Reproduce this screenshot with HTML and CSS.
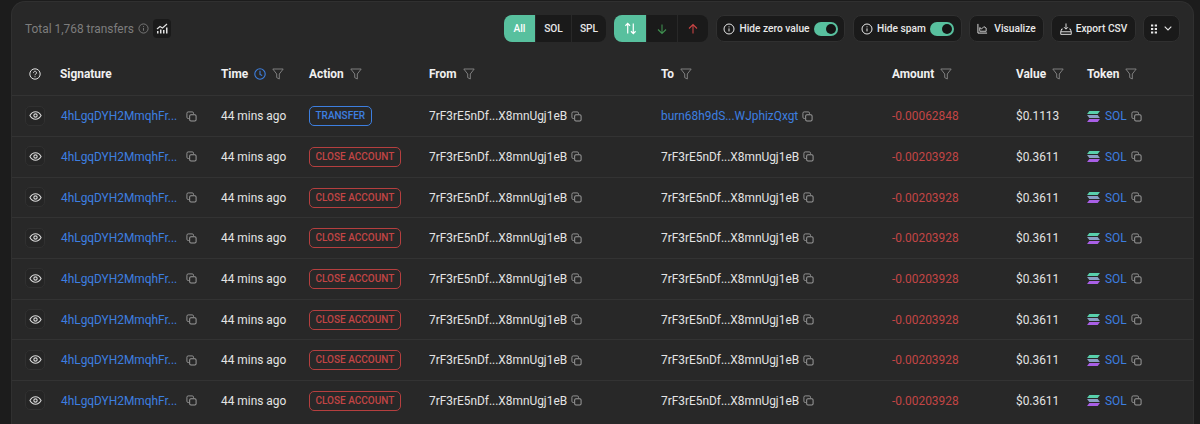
FILE: index.html
```html
<!DOCTYPE html>
<html lang="en">
<head>
<meta charset="utf-8">
<title>Transfers</title>
<link rel="stylesheet" href="styles.css">
</head>
<body>
<svg class="sprite" width="0" height="0" aria-hidden="true">
  <defs>
    <symbol id="copy" viewBox="0 0 12 12"><path d="M3.2 8.2H2.4A1.4 1.4 0 0 1 1 6.8V2.4A1.4 1.4 0 0 1 2.4 1h4.4a1.4 1.4 0 0 1 1.4 1.4v.8" fill="none" stroke="currentColor"/><rect x="4" y="4" width="7" height="7" rx="1.4" fill="none" stroke="currentColor" stroke-width="1.1"/></symbol>
    <symbol id="filter" viewBox="0 0 12 12"><path d="M.8 1h10.4L7.3 6v5L4.7 9.6V6z" fill="none" stroke="currentColor"/></symbol>
    <symbol id="eye" viewBox="0 0 14 14"><path d="M1 7c1.500-2.700 3.500-4 6-4s4.500 1.300 6 4c-1.500 2.700-3.500 4-6 4s-4.500-1.300-6-4z" fill="none" stroke="currentColor" stroke-width="1.200"/><circle cx="7" cy="7" r="1.800" fill="none" stroke="currentColor" stroke-width="1.200"/></symbol>
    <symbol id="info" viewBox="0 0 12 12"><circle cx="6" cy="6" r="5" fill="none" stroke="currentColor"/><path d="M6 5.400v3M6 3.400v.9" stroke="currentColor"/></symbol>
    <symbol id="sol" viewBox="0 0 14 12">
      <path d="M2.400 0H14l-2.400 3.200H0z" fill="#58d0ac"/>
      <path d="M0 4.400h11.600L14 7.600H2.400z" fill="#8a9fc4"/>
      <path d="M2.400 8.800H14L11.600 12H0z" fill="#a95fe6"/>
    </symbol>
  </defs>
</svg>

<main class="card">
  <header class="toolbar">
    <div class="total">
      <span>Total 1,768 transfers</span>
      <svg class="ico-info"><use href="#info"/></svg>
      <span class="chart-btn">
        <svg width="12" height="11" viewBox="0 0 12 11"><path d="M1 6l3-2.500 2.500 1.500L11 1" fill="none" stroke="currentColor" stroke-width="1.200"/><path d="M1 8h1.500v2.500H1zM4 6.500h1.500v4H4zM7 7h1.500v3.500H7zM10 4.500h1.500v6H10z" fill="currentColor"/></svg>
      </span>
    </div>
    <div class="controls">
      <div class="seg">
        <span class="seg-btn seg-all active">All</span>
        <span class="seg-btn seg-sol">SOL</span>
        <span class="seg-btn seg-spl">SPL</span>
      </div>
      <div class="seg">
        <span class="seg-btn seg-dir active"><svg width="13" height="13" viewBox="0 0 14 14"><path d="M4 12.500V1.500M1.500 4L4 1.500 6.500 4M10 1.500v11M7.500 10l2.500 2.500 2.500-2.500" fill="none" stroke="currentColor" stroke-width="1.300"/></svg></span>
        <span class="seg-btn seg-dir dir-in"><svg width="12" height="12" viewBox="0 0 12 12"><path d="M6 1.500v9M2 6.500l4 4 4-4" fill="none" stroke="currentColor" stroke-width="1.100"/></svg></span>
        <span class="seg-btn seg-dir dir-out"><svg width="12" height="12" viewBox="0 0 12 12"><path d="M6 10.500v-9M2 5.500l4-4 4 4" fill="none" stroke="currentColor" stroke-width="1.100"/></svg></span>
      </div>
      <div class="tool tool-zero"><svg class="ico-tool"><use href="#info"/></svg><span>Hide zero value</span><span class="switch"></span></div>
      <div class="tool tool-spam"><svg class="ico-tool"><use href="#info"/></svg><span>Hide spam</span><span class="switch"></span></div>
      <div class="tool tool-vis"><svg width="11" height="11" viewBox="0 0 12 12"><path d="M1 1v10h10" fill="none" stroke="currentColor"/><path d="M3 8V5l2 1.500L7.500 4 10 5.500V9H3z" fill="none" stroke="currentColor" stroke-width=".9"/></svg><span>Visualize</span></div>
      <div class="tool tool-csv"><svg width="12" height="12" viewBox="0 0 13 13"><path d="M6.500 .5v6M4.300 4.500l2.200 2.200 2.200-2.200" fill="none" stroke="currentColor"/><path d="M3 6.500H1.800L.8 9.500v2.800h11.400V9.500l-1-3H10M.8 9.500h11.400" fill="none" stroke="currentColor"/></svg><span>Export CSV</span></div>
      <div class="tool tool-more">
        <svg width="6" height="10" viewBox="0 0 8 12"><path d="M0 0h3v2.500H0zM5 0h3v2.500H5zM0 4.700h3v2.500H0zM5 4.700h3v2.500H5zM0 9.400h3V12H0zM5 9.400h3V12H5z" fill="currentColor"/></svg>
        <svg width="8" height="5" viewBox="0 0 8 5"><path d="M.7.7L4 4 7.300.7" fill="none" stroke="currentColor" stroke-width="1.100"/></svg>
      </div>
    </div>
  </header>

  <div class="row head">
    <div class="cell"><svg class="ico-help" viewBox="0 0 12 12"><circle cx="6" cy="6" r="5.200" fill="none" stroke="currentColor"/><path d="M4.500 4.700a1.500 1.500 0 1 1 2.300 1.300c-.6.400-.8.600-.8 1.200M6 8.300v.9" fill="none" stroke="currentColor"/></svg></div>
    <div class="cell">Signature</div>
    <div class="cell">Time<svg class="ico-clock" viewBox="0 0 12 12"><circle cx="6" cy="6" r="5.200" fill="none" stroke="currentColor" stroke-width="1.100"/><path d="M6 2.800V6.400L8.200 7.500" fill="none" stroke="currentColor" stroke-width="1.100"/></svg><svg class="ico-filter"><use href="#filter"/></svg></div>
    <div class="cell">Action<svg class="ico-filter"><use href="#filter"/></svg></div>
    <div class="cell">From<svg class="ico-filter"><use href="#filter"/></svg></div>
    <div class="cell">To<svg class="ico-filter"><use href="#filter"/></svg></div>
    <div class="cell">Amount<svg class="ico-filter"><use href="#filter"/></svg></div>
    <div class="cell">Value<svg class="ico-filter"><use href="#filter"/></svg></div>
    <div class="cell">Token<svg class="ico-filter"><use href="#filter"/></svg></div>
  </div>

  <div class="row">
    <div class="cell"><span class="eye"><svg><use href="#eye"/></svg></span></div>
    <div class="cell"><a class="link sig">4hLgqDYH2MmqhFr...</a><svg class="ico-copy"><use href="#copy"/></svg></div>
    <div class="cell">44 mins ago</div>
    <div class="cell"><span class="tag tag-blue">TRANSFER</span></div>
    <div class="cell">7rF3rE5nDf...X8mnUgj1eB<svg class="ico-copy"><use href="#copy"/></svg></div>
    <div class="cell"><a class="link">burn68h9dS...WJphizQxgt</a><svg class="ico-copy"><use href="#copy"/></svg></div>
    <div class="cell amount">-0.00062848</div>
    <div class="cell">$0.1113</div>
    <div class="cell"><svg class="ico-sol"><use href="#sol"/></svg><a class="link">SOL</a><svg class="ico-copy"><use href="#copy"/></svg></div>
  </div>
  <div class="row">
    <div class="cell"><span class="eye"><svg><use href="#eye"/></svg></span></div>
    <div class="cell"><a class="link sig">4hLgqDYH2MmqhFr...</a><svg class="ico-copy"><use href="#copy"/></svg></div>
    <div class="cell">44 mins ago</div>
    <div class="cell"><span class="tag tag-red">CLOSE ACCOUNT</span></div>
    <div class="cell">7rF3rE5nDf...X8mnUgj1eB<svg class="ico-copy"><use href="#copy"/></svg></div>
    <div class="cell">7rF3rE5nDf...X8mnUgj1eB<svg class="ico-copy"><use href="#copy"/></svg></div>
    <div class="cell amount">-0.00203928</div>
    <div class="cell">$0.3611</div>
    <div class="cell"><svg class="ico-sol"><use href="#sol"/></svg><a class="link">SOL</a><svg class="ico-copy"><use href="#copy"/></svg></div>
  </div>
  <div class="row">
    <div class="cell"><span class="eye"><svg><use href="#eye"/></svg></span></div>
    <div class="cell"><a class="link sig">4hLgqDYH2MmqhFr...</a><svg class="ico-copy"><use href="#copy"/></svg></div>
    <div class="cell">44 mins ago</div>
    <div class="cell"><span class="tag tag-red">CLOSE ACCOUNT</span></div>
    <div class="cell">7rF3rE5nDf...X8mnUgj1eB<svg class="ico-copy"><use href="#copy"/></svg></div>
    <div class="cell">7rF3rE5nDf...X8mnUgj1eB<svg class="ico-copy"><use href="#copy"/></svg></div>
    <div class="cell amount">-0.00203928</div>
    <div class="cell">$0.3611</div>
    <div class="cell"><svg class="ico-sol"><use href="#sol"/></svg><a class="link">SOL</a><svg class="ico-copy"><use href="#copy"/></svg></div>
  </div>
  <div class="row">
    <div class="cell"><span class="eye"><svg><use href="#eye"/></svg></span></div>
    <div class="cell"><a class="link sig">4hLgqDYH2MmqhFr...</a><svg class="ico-copy"><use href="#copy"/></svg></div>
    <div class="cell">44 mins ago</div>
    <div class="cell"><span class="tag tag-red">CLOSE ACCOUNT</span></div>
    <div class="cell">7rF3rE5nDf...X8mnUgj1eB<svg class="ico-copy"><use href="#copy"/></svg></div>
    <div class="cell">7rF3rE5nDf...X8mnUgj1eB<svg class="ico-copy"><use href="#copy"/></svg></div>
    <div class="cell amount">-0.00203928</div>
    <div class="cell">$0.3611</div>
    <div class="cell"><svg class="ico-sol"><use href="#sol"/></svg><a class="link">SOL</a><svg class="ico-copy"><use href="#copy"/></svg></div>
  </div>
  <div class="row">
    <div class="cell"><span class="eye"><svg><use href="#eye"/></svg></span></div>
    <div class="cell"><a class="link sig">4hLgqDYH2MmqhFr...</a><svg class="ico-copy"><use href="#copy"/></svg></div>
    <div class="cell">44 mins ago</div>
    <div class="cell"><span class="tag tag-red">CLOSE ACCOUNT</span></div>
    <div class="cell">7rF3rE5nDf...X8mnUgj1eB<svg class="ico-copy"><use href="#copy"/></svg></div>
    <div class="cell">7rF3rE5nDf...X8mnUgj1eB<svg class="ico-copy"><use href="#copy"/></svg></div>
    <div class="cell amount">-0.00203928</div>
    <div class="cell">$0.3611</div>
    <div class="cell"><svg class="ico-sol"><use href="#sol"/></svg><a class="link">SOL</a><svg class="ico-copy"><use href="#copy"/></svg></div>
  </div>
  <div class="row">
    <div class="cell"><span class="eye"><svg><use href="#eye"/></svg></span></div>
    <div class="cell"><a class="link sig">4hLgqDYH2MmqhFr...</a><svg class="ico-copy"><use href="#copy"/></svg></div>
    <div class="cell">44 mins ago</div>
    <div class="cell"><span class="tag tag-red">CLOSE ACCOUNT</span></div>
    <div class="cell">7rF3rE5nDf...X8mnUgj1eB<svg class="ico-copy"><use href="#copy"/></svg></div>
    <div class="cell">7rF3rE5nDf...X8mnUgj1eB<svg class="ico-copy"><use href="#copy"/></svg></div>
    <div class="cell amount">-0.00203928</div>
    <div class="cell">$0.3611</div>
    <div class="cell"><svg class="ico-sol"><use href="#sol"/></svg><a class="link">SOL</a><svg class="ico-copy"><use href="#copy"/></svg></div>
  </div>
  <div class="row">
    <div class="cell"><span class="eye"><svg><use href="#eye"/></svg></span></div>
    <div class="cell"><a class="link sig">4hLgqDYH2MmqhFr...</a><svg class="ico-copy"><use href="#copy"/></svg></div>
    <div class="cell">44 mins ago</div>
    <div class="cell"><span class="tag tag-red">CLOSE ACCOUNT</span></div>
    <div class="cell">7rF3rE5nDf...X8mnUgj1eB<svg class="ico-copy"><use href="#copy"/></svg></div>
    <div class="cell">7rF3rE5nDf...X8mnUgj1eB<svg class="ico-copy"><use href="#copy"/></svg></div>
    <div class="cell amount">-0.00203928</div>
    <div class="cell">$0.3611</div>
    <div class="cell"><svg class="ico-sol"><use href="#sol"/></svg><a class="link">SOL</a><svg class="ico-copy"><use href="#copy"/></svg></div>
  </div>
  <div class="row">
    <div class="cell"><span class="eye"><svg><use href="#eye"/></svg></span></div>
    <div class="cell"><a class="link sig">4hLgqDYH2MmqhFr...</a><svg class="ico-copy"><use href="#copy"/></svg></div>
    <div class="cell">44 mins ago</div>
    <div class="cell"><span class="tag tag-red">CLOSE ACCOUNT</span></div>
    <div class="cell">7rF3rE5nDf...X8mnUgj1eB<svg class="ico-copy"><use href="#copy"/></svg></div>
    <div class="cell">7rF3rE5nDf...X8mnUgj1eB<svg class="ico-copy"><use href="#copy"/></svg></div>
    <div class="cell amount">-0.00203928</div>
    <div class="cell">$0.3611</div>
    <div class="cell"><svg class="ico-sol"><use href="#sol"/></svg><a class="link">SOL</a><svg class="ico-copy"><use href="#copy"/></svg></div>
  </div>
</main>
</body>
</html>
```
FILE: styles.css
```css
* { box-sizing: border-box; }
html, body { height: 424px; overflow: hidden; }
body {
  margin: 0;
  padding: 1px 0 0 11px;
  background: #1c1c1c;
  color: #e8e8e8;
  font-family: Roboto, "Liberation Sans", sans-serif;
  font-size: 11.9px;
  line-height: 16px;
}
.sprite { position: absolute; }
.card {
  width: 1183px;
  height: 423px;
  overflow: hidden;
  background: #282828;
  border: 1px solid #303030;
  border-bottom: 0;
  border-radius: 14px 14px 0 0;
}
.toolbar {
  height: 51px;
  display: flex;
  align-items: flex-start;
  justify-content: space-between;
  padding: 13px 13px 0 13px;
}
.total {
  display: flex;
  align-items: center;
  height: 27px;
  color: #7d7d7d;
}
.ico-info { width: 11px; height: 11px; margin-left: 4px; }
.chart-btn {
  width: 18px;
  height: 19px;
  margin-left: 4px;
  border-radius: 4px;
  background: #1a1a1a;
  color: #e0e0e0;
  display: flex;
  align-items: center;
  justify-content: center;
}
.controls { display: flex; gap: 8px; align-items: flex-start; font-size: 10.2px; font-weight: 500; }
.seg { display: flex; height: 27px; }
.seg-btn {
  display: flex;
  align-items: center;
  justify-content: center;
  background: #1a1a1a;
  border-left: 1px solid #282828;
  color: #e8e8e8;
}
.seg-btn:first-child { border-left: 0; border-radius: 8px 0 0 8px; }
.seg-btn:last-child { border-radius: 0 8px 8px 0; }
.seg-btn.active { background: #58c09e; color: #fff; }
.seg-all { width: 31px; }
.seg-sol { width: 36px; }
.seg-spl { width: 35px; }
.seg-dir { width: 32px; }
.dir-in { color: #3f8f4f; width: 31px; }
.dir-out { color: #c94444; width: 31px; }
.tool {
  display: flex;
  align-items: center;
  height: 27px;
  background: #1a1a1a;
  border: 1px solid #303030;
  border-radius: 8px;
  color: #e8e8e8;
  gap: 4px;
  justify-content: center;
}
.tool-zero { width: 129px; }
.tool-spam { width: 109px; margin-right: -1px; }
.tool-vis { width: 75px; gap: 6px; margin-right: -1px; }
.tool-csv { width: 85px; gap: 4px; margin-right: -1px; }
.tool-more { width: 37px; gap: 7px; }
.ico-tool { width: 12px; height: 12px; }
.switch {
  position: relative;
  width: 24px;
  height: 14px;
  border-radius: 7px;
  background: #58c09e;
}
.switch::after {
  content: "";
  position: absolute;
  right: 2px;
  top: 2px;
  width: 10px;
  height: 10px;
  border-radius: 50%;
  background: #141414;
}
.row {
  display: grid;
  grid-template-columns: 48px 161px 88px 120px 232px 231px 124px 71px 1fr;
  height: 40.67px;
  border-top: 1px solid #333;
}
.row.head {
  height: 42.4px;
  border-top: 0;
  font-weight: 700;
}
.cell {
  display: flex;
  align-items: center;
  white-space: nowrap;
  min-width: 0;
  color: #e4e4e4;
}
.head .cell { color: #f0f0f0; }
.link { color: #3d7fe0; }
.cell.amount { color: #c24545; }
.sig { width: 121px; margin-left: 1px; }
.eye {
  width: 20px;
  height: 20px;
  margin: 0 0 1px 13px;
  border: 1px solid #303030;
  border-radius: 5px;
  background: #252525;
  color: #d8d8d8;
  display: flex;
  align-items: center;
  justify-content: center;
}
.eye svg { width: 13px; height: 13px; }
.ico-copy { width: 11px; height: 11px; margin-left: 4px; color: #9a9a9a; flex: none; }
.ico-filter { width: 12px; height: 12px; margin-left: 6px; color: #7f7f7f; }
.ico-clock { width: 12px; height: 12px; margin-left: 6px; color: #3d7fe0; }
.ico-help { width: 12px; height: 12px; margin-left: 17px; color: #e0e0e0; }
.ico-sol { width: 13px; height: 11px; margin-right: 5px; flex: none; }
.tag {
  display: inline-flex;
  align-items: center;
  height: 20px;
  padding: 0 5.5px;
  border: 1px solid;
  border-radius: 5px;
  font-size: 10px;
  font-weight: 500;
}
.tag-blue { color: #3d7fe0; border-color: #3d7fe0; }
.tag-red { color: #c24545; border-color: #b53f3f; }
```
